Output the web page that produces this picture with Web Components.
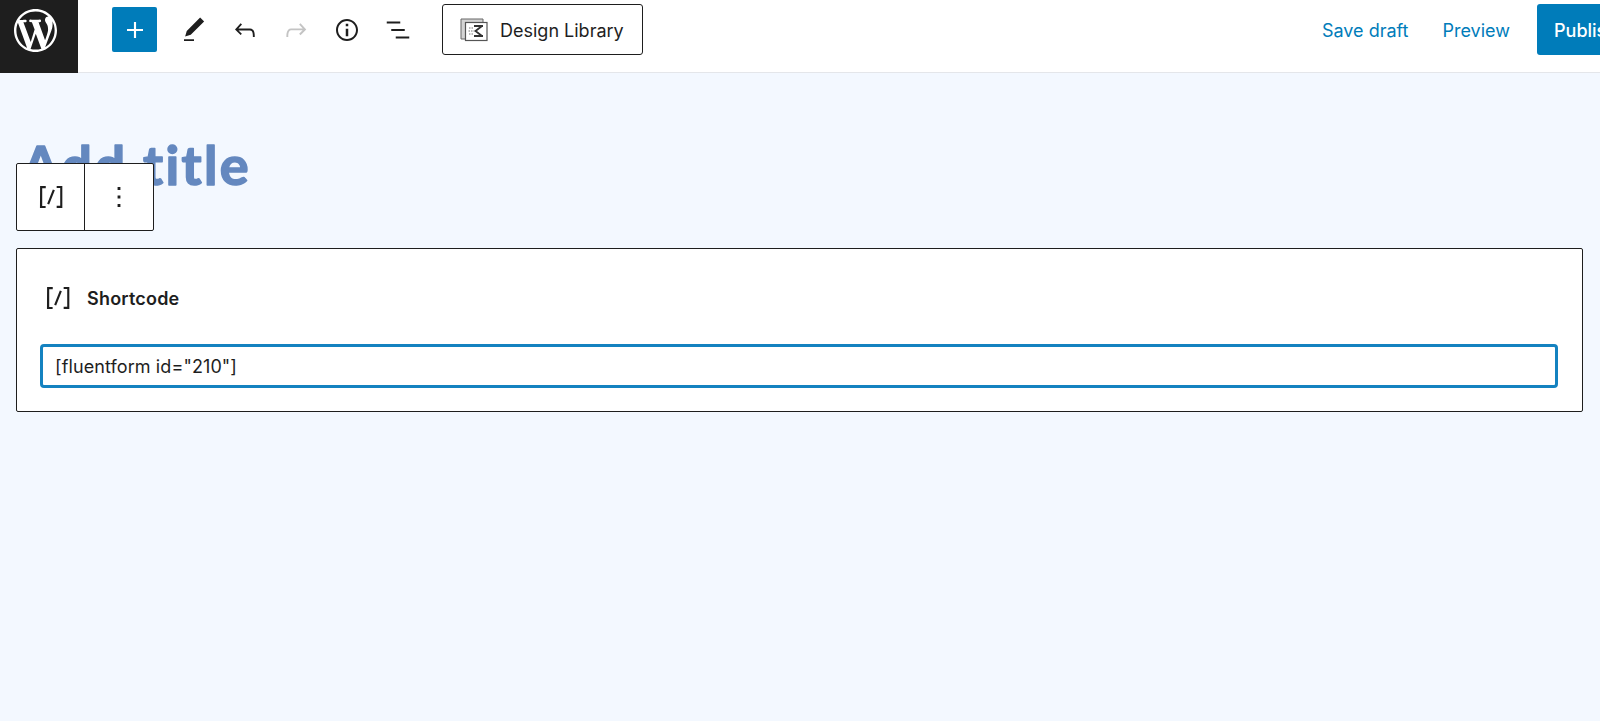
<!DOCTYPE html>
<html>
<head>
<meta charset="utf-8">
<title>Add title</title>
<style>
    html, body { margin: 0; padding: 0; height: 100%; }
    body { overflow: hidden; background: #f3f8ff; font-family: Inter, "Liberation Sans", sans-serif; }
</style>
</head>
<body>
<editor-topbar>
    <tool-icon slot="tools" name="edit"></tool-icon>
    <tool-icon slot="tools" name="undo"></tool-icon>
    <tool-icon slot="tools" name="redo" muted></tool-icon>
    <tool-icon slot="tools" name="info"></tool-icon>
    <tool-icon slot="tools" name="list"></tool-icon>
</editor-topbar>
<editor-canvas>
    <post-title text="Add title"></post-title>
    <block-toolbar></block-toolbar>
    <shortcode-block value='[fluentform id="210"]'>Shortcode</shortcode-block>
</editor-canvas>

<script>
const ICONS = {
    plus: 'M18 11.2h-5.2V6h-1.6v5.2H6v1.6h5.2V18h1.6v-5.2H18z',
    edit: 'M20.1 5.1L16.9 2 6.2 12.7l-1.3 4.4 4.5-1.3L20.1 5.1zM4 20.8h8v-1.5H4v1.5z',
    undo: 'M18.3 11.7c-.6-.6-1.4-.9-2.3-.9H6.7l2.9-3.3-1.1-1-4.5 5L8.5 16l1-1-2.7-2.7H16c.5 0 .9.2 1.3.5 1 1 1 3.4 1 4.5v.3h1.5v-.2c0-1.5 0-4.3-1.5-5.7z',
    redo: 'M15.6 6.5l-1.1 1 2.9 3.3H8c-.9 0-1.7.3-2.3.9-1.4 1.5-1.4 4.2-1.4 5.6v.2h1.5v-.3c0-1.1 0-3.5 1-4.5.3-.3.7-.5 1.3-.5h9.2L14.5 15l1.1 1.1 4.6-4.6-4.6-5z',
    info: 'M12 3.2c-4.8 0-8.8 3.9-8.8 8.8 0 4.8 3.9 8.8 8.8 8.8 4.8 0 8.8-3.9 8.8-8.8 0-4.8-4-8.8-8.8-8.8zm0 16c-4 0-7.2-3.3-7.2-7.2C4.8 8 8 4.8 12 4.8s7.2 3.3 7.2 7.2c0 4-3.2 7.2-7.2 7.2zM11 17h2v-6h-2v6zm0-8h2V7h-2v2z',
    list: 'M13.8 5.2H3v1.5h10.8V5.2zm-3.6 12v1.5H21v-1.5H10.2zm7.2-6H6.6v1.5h10.8v-1.5z',
    shortcode: 'M16 4.2v1.5h2.5v12.5H16v1.5h4V4.2h-4zM4.2 19.8h4v-1.5H5.8V5.8h2.5V4.2h-4l-.1 15.6zm5.1-3.1l1.4.6 4-10-1.4-.6-4 10z',
    more: 'M13 19h-2v-2h2v2zm0-6h-2v-2h2v2zm0-6h-2V5h2v2z'
};

class ToolIcon extends HTMLElement {
    constructor() {
        super();
        this.attachShadow({ mode: 'open' });
    }

    connectedCallback() {
        const size = this.getAttribute('size') || 30;
        this.shadowRoot.innerHTML = `
            <style>
                :host {
                    display: flex;
                    align-items: center;
                    justify-content: center;
                    color: #1e1e1e;
                }
                :host([muted]) { color: #c4c4c4; }
                svg { display: block; fill: currentColor; }
            </style>
            <svg width="${size}" height="${size}" viewBox="0 0 24 24"><path d="${ICONS[this.getAttribute('name')]}"/></svg>
        `;
    }
}

class EditorTopbar extends HTMLElement {
    constructor() {
        super();
        this.attachShadow({ mode: 'open' });
        this.shadowRoot.innerHTML = `
            <style>
                :host {
                    display: flex;
                    align-items: stretch;
                    height: 73px;
                    background: #fff;
                    box-shadow: inset 0 -1px #e4e6ea;
                    overflow: hidden;
                }
                .logo {
                    flex: none;
                    box-sizing: border-box;
                    width: 78px;
                    padding: 0 7px 12px 0;
                    background: #1e1e1e;
                    display: flex;
                    align-items: center;
                    justify-content: center;
                }
                .logo svg { display: block; fill: #fff; }
                .left {
                    display: flex;
                    align-items: center;
                    padding: 0 0 14px 34px;
                }
                .add {
                    width: 45px;
                    height: 45px;
                    border-radius: 2px;
                    background: #007cba;
                    display: flex;
                    align-items: center;
                    justify-content: center;
                    margin-right: 22px;
                }
                .add tool-icon { color: #fff; }
                .tools { display: flex; gap: 21px; align-items: center; }
                .library {
                    display: flex;
                    align-items: center;
                    gap: 12px;
                    box-sizing: border-box;
                    width: 201px;
                    height: 51px;
                    margin-left: 29px;
                    padding-left: 17px;
                    background: #fff;
                    border: 1px solid #1e1e1e;
                    border-radius: 3px;
                    font-size: 18px;
                    color: #1e1e1e;
                }
                .library svg { display: block; flex: none; }
                .library span { padding-top: 2px; }
                .right {
                    margin-left: auto;
                    display: flex;
                    align-items: center;
                    padding-bottom: 14px;
                    font-size: 18px;
                    color: #007cba;
                }
                .save, .preview { padding-top: 2px; }
                .preview { margin: 0 27px 0 34px; }
                .publish {
                    flex: none;
                    width: 63px;
                    height: 51px;
                    box-sizing: border-box;
                    padding: 2px 0 0 17px;
                    display: flex;
                    align-items: center;
                    background: #007cba;
                    color: #fff;
                    font-weight: 500;
                    border-radius: 3px 0 0 3px;
                    white-space: nowrap;
                    overflow: hidden;
                }
            </style>
            <div class="logo">
                <svg width="43" height="43" viewBox="0 0 20 20"><path d="M20 10c0-5.51-4.49-10-10-10C4.48 0 0 4.49 0 10c0 5.52 4.48 10 10 10 5.51 0 10-4.48 10-10zM7.78 15.37L4.37 6.22c.55-.02 1.17-.08 1.17-.08.5-.06.44-1.13-.06-1.11 0 0-1.45.11-2.37.11-.18 0-.37 0-.58-.01C4.12 2.69 6.87 1.11 10 1.11c2.33 0 4.45.87 6.05 2.34-.68-.11-1.65.39-1.65 1.58 0 .74.45 1.36.9 2.1.35.61.55 1.36.55 2.46 0 1.49-1.4 5-1.4 5l-3.03-8.37c.54-.02.82-.17.82-.17.5-.05.44-1.25-.06-1.22 0 0-1.44.12-2.38.12-.87 0-2.33-.12-2.33-.12-.5-.03-.56 1.2-.06 1.22l.92.08 1.26 3.41zM17.41 10c.24-.64.74-1.87.43-4.25.7 1.29 1.05 2.71 1.05 4.25 0 3.29-1.73 6.24-4.4 7.78.97-2.59 1.94-5.2 2.92-7.78zM6.1 18.09C3.12 16.65 1.11 13.53 1.11 10c0-1.3.23-2.48.72-3.59C3.25 10.3 4.67 14.2 6.1 18.09zm4.03-6.63l2.58 6.98c-.86.29-1.76.45-2.71.45-.79 0-1.57-.11-2.29-.33.81-2.38 1.62-4.74 2.42-7.1z"/></svg>
            </div>
            <div class="left">
                <div class="add"><tool-icon name="plus" size="32"></tool-icon></div>
                <div class="tools"><slot name="tools"></slot></div>
                <div class="library">
                    <svg width="28" height="24" viewBox="0 0 28 24">
                        <path d="M1 1h22v3.5H5.5V21H1z" fill="#d4d4d4" stroke="#666" stroke-width="1"/>
                        <rect x="5.5" y="4.5" width="21.5" height="18" fill="#fff" stroke="#555" stroke-width="1.2"/>
                        <path d="M14 8h9M22 8l-6.5 5 6.5 5M14 18h9" fill="none" stroke="#333" stroke-width="1.8"/>
                        <path d="M9 10h5M8.5 13h6M9 16h5" stroke="#777" stroke-width="1.2" stroke-dasharray="1.5 1"/>
                    </svg>
                    <span>Design Library</span>
                </div>
            </div>
            <div class="right">
                <span class="save">Save draft</span>
                <span class="preview">Preview</span>
                <div class="publish">Publish</div>
            </div>
        `;
    }
}

class EditorCanvas extends HTMLElement {
    constructor() {
        super();
        this.attachShadow({ mode: 'open' });
        this.shadowRoot.innerHTML = `
            <style>
                :host {
                    display: block;
                    position: relative;
                    padding: 58px 17px 0 16px;
                }
            </style>
            <slot></slot>
        `;
    }
}

// svg text so the stroke can have round joins, the title font is rounded
class PostTitle extends HTMLElement {
    constructor() {
        super();
        this.attachShadow({ mode: 'open' });
    }

    connectedCallback() {
        this.shadowRoot.innerHTML = `
            <style>
                :host {
                    display: block;
                    height: 117px;
                }
                svg { display: block; overflow: visible; }
                text {
                    font-family: Lato, "Noto Sans", sans-serif;
                    font-weight: 700;
                    font-size: 54px;
                    letter-spacing: 2.4px;
                    fill: #6488bf;
                    stroke: #6488bf;
                    stroke-width: 1.6px;
                    stroke-linejoin: round;
                }
            </style>
            <svg width="300" height="70"><text x="6" y="54">${this.getAttribute('text')}</text></svg>
        `;
    }
}

class BlockToolbar extends HTMLElement {
    constructor() {
        super();
        this.attachShadow({ mode: 'open' });
        this.shadowRoot.innerHTML = `
            <style>
                :host {
                    position: absolute;
                    left: 16px;
                    top: 90px;
                    display: flex;
                    box-sizing: border-box;
                    height: 68px;
                    width: 138px;
                    background: #fff;
                    border: 1px solid #1e1e1e;
                    border-radius: 2px;
                }
                .cell {
                    display: flex;
                    align-items: center;
                    justify-content: center;
                }
                .code { flex: none; width: 67px; border-right: 1px solid #1e1e1e; }
                .more { flex: 1; }
            </style>
            <div class="cell code"><tool-icon name="shortcode" size="34"></tool-icon></div>
            <div class="cell more"><tool-icon name="more" size="34"></tool-icon></div>
        `;
    }
}

class ShortcodeBlock extends HTMLElement {
    constructor() {
        super();
        this.attachShadow({ mode: 'open' });
        this.shadowRoot.innerHTML = `
            <style>
                :host {
                    display: block;
                    box-sizing: border-box;
                    height: 164px;
                    padding: 27px 24px 0 23px;
                    background: #fff;
                    border: 1px solid #1e1e1e;
                    border-radius: 2px;
                }
                .head {
                    display: flex;
                    align-items: center;
                    gap: 12px;
                    height: 44px;
                    margin-left: 1px;
                    font-size: 18px;
                    font-weight: 600;
                    letter-spacing: .2px;
                    color: #1e1e1e;
                }
                .field {
                    box-sizing: border-box;
                    height: 44px;
                    margin-top: 24px;
                    padding-left: 12px;
                    display: flex;
                    align-items: center;
                    border: 3px solid #1482c0;
                    border-radius: 4px;
                    font-size: 18px;
                    letter-spacing: .1px;
                    color: #1e1e1e;
                }
            </style>
            <div class="head"><tool-icon name="shortcode" size="34"></tool-icon><slot></slot></div>
            <div class="field"></div>
        `;
    }

    connectedCallback() {
        this.shadowRoot.querySelector('.field').textContent = this.getAttribute('value');
    }
}

customElements.define('tool-icon', ToolIcon);
customElements.define('editor-topbar', EditorTopbar);
customElements.define('editor-canvas', EditorCanvas);
customElements.define('post-title', PostTitle);
customElements.define('block-toolbar', BlockToolbar);
customElements.define('shortcode-block', ShortcodeBlock);
</script>
</body>
</html>
